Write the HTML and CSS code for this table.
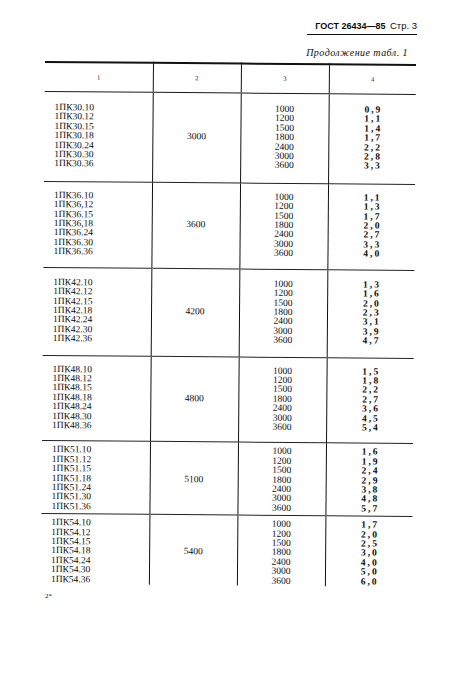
FILE: index.html
```html
<!DOCTYPE html>
<html lang="ru">
<head>
<meta charset="utf-8">
<title>ГОСТ 26434—85 Стр. 3</title>
<link rel="stylesheet" href="styles.css">
</head>
<body>
<div class="page">
  <header class="running-head"><span class="doc">ГОСТ 26434—85</span> <span class="pg">Стр. 3</span></header>
  <p class="caption">Продолжение табл. 1</p>
  <table class="data">
    <colgroup>
      <col class="c1"><col class="c2"><col class="c3"><col class="c4">
    </colgroup>
    <thead>
      <tr class="head"><th>1</th><th>2</th><th>3</th><th>4</th></tr>
    </thead>
    <tbody>
      <tr class="grp g1">
        <td class="mark">1ПК30.10<br>1ПК30.12<br>1ПК30.15<br>1ПК30.18<br>1ПК30.24<br>1ПК30.30<br>1ПК30.36</td>
        <td class="len">3000</td>
        <td class="wid">1000<br>1200<br>1500<br>1800<br>2400<br>3000<br>3600</td>
        <td class="mass">0,9<br>1,1<br>1,4<br>1,7<br>2,2<br>2,8<br>3,3</td>
      </tr>
      <tr class="grp g2">
        <td class="mark">1ПК36.10<br>1ПК36,12<br>1ПК36.15<br>1ПК36,18<br>1ПК36.24<br>1ПК36.30<br>1ПК36.36</td>
        <td class="len">3600</td>
        <td class="wid">1000<br>1200<br>1500<br>1800<br>2400<br>3000<br>3600</td>
        <td class="mass">1,1<br>1,3<br>1,7<br>2,0<br>2,7<br>3,3<br>4,0</td>
      </tr>
      <tr class="grp g3">
        <td class="mark">1ПК42.10<br>1ПК42.12<br>1ПК42.15<br>1ПК42.18<br>1ПК42.24<br>1ПК42.30<br>1ПК42.36</td>
        <td class="len">4200</td>
        <td class="wid">1000<br>1200<br>1500<br>1800<br>2400<br>3000<br>3600</td>
        <td class="mass">1,3<br>1,6<br>2,0<br>2,3<br>3,1<br>3,9<br>4,7</td>
      </tr>
      <tr class="grp g4">
        <td class="mark">1ПК48.10<br>1ПК48.12<br>1ПК48.15<br>1ПК48.18<br>1ПК48.24<br>1ПК48.30<br>1ПК48.36</td>
        <td class="len">4800</td>
        <td class="wid">1000<br>1200<br>1500<br>1800<br>2400<br>3000<br>3600</td>
        <td class="mass">1,5<br>1,8<br>2,2<br>2,7<br>3,6<br>4,5<br>5,4</td>
      </tr>
      <tr class="grp g5">
        <td class="mark">1ПК51.10<br>1ПК51.12<br>1ПК51.15<br>1ПК51.18<br>1ПК51.24<br>1ПК51.30<br>1ПК51.36</td>
        <td class="len">5100</td>
        <td class="wid">1000<br>1200<br>1500<br>1800<br>2400<br>3000<br>3600</td>
        <td class="mass">1,6<br>1,9<br>2,4<br>2,9<br>3,8<br>4,8<br>5,7</td>
      </tr>
      <tr class="grp g6">
        <td class="mark">1ПК54.10<br>1ПК54.12<br>1ПК54.15<br>1ПК54.18<br>1ПК54.24<br>1ПК54.30<br>1ПК54.36</td>
        <td class="len">5400</td>
        <td class="wid">1000<br>1200<br>1500<br>1800<br>2400<br>3000<br>3600</td>
        <td class="mass">1,7<br>2,0<br>2,5<br>3,0<br>4,0<br>5,0<br>6,0</td>
      </tr>
    </tbody>
  </table>
  <p class="sig">2*</p>
</div>
</body>
</html>
```

FILE: styles.css
```css
html, body {
  margin: 0;
  padding: 0;
  background: #ffffff;
}

.page {
  width: 452px;
  height: 682px;
  color: #0d0d0d;
  font-family: "Liberation Serif", "DejaVu Serif", serif;
  display: flex;
  flex-direction: column;
}

.running-head {
  align-self: flex-end;
  margin: 19px 35px 0 0;
  padding: 0 0 3px 8px;
  border-bottom: 1.8px solid #111111;
  font-family: "Liberation Sans", "DejaVu Sans", sans-serif;
  line-height: 10px;
  white-space: nowrap;
}

.running-head .doc {
  font-weight: bold;
  font-size: 9px;
}

.running-head .pg {
  font-size: 9.5px;
}

.caption {
  align-self: flex-end;
  margin: 13px 44px 0 0;
  font-family: "Liberation Serif", "DejaVu Serif", serif;
  font-style: italic;
  font-size: 10px;
  letter-spacing: 0.45px;
  line-height: 10px;
}

.data {
  margin: 3px 0 0 45px;
  width: 371px;
  border-collapse: collapse;
  table-layout: fixed;
  border-top: 2.2px solid #111111;
  font-size: 9.5px;
  line-height: 9.4px;
  transform: rotate(0.45deg);
  transform-origin: 0 0;
}

.c1 { width: 108px; }
.c2 { width: 88px; }
.c3 { width: 88px; }
.c4 { width: 87px; }

.data th,
.data td {
  padding: 0;
  text-align: center;
  vertical-align: middle;
}

.data th + th,
.data td + td {
  border-left: 1.4px solid #111111;
}

.head th {
  height: 28px;
  font-weight: normal;
  font-size: 6.5px;
  border-bottom: 1.8px solid #1a1a1a;
}

.grp + .grp td {
  border-top: 1.5px solid #222222;
}

.data td.mark {
  text-align: left;
  padding-left: 10px;
}

.data td.mass {
  letter-spacing: 2px;
  padding-left: 2px;
  font-weight: bold;
}

.g1 td { padding-top: 11px; padding-bottom: 12px; }
.g2 td { padding-top: 9px; padding-bottom: 10px; }
.g3 td { padding-top: 10px; padding-bottom: 11px; }
.g4 td { padding-top: 9px; padding-bottom: 10px; }
.g5 td { padding-top: 4px; padding-bottom: 2px; }
.g6 td { padding-top: 4px; padding-bottom: 0; }

.sig {
  margin: 8px 0 0 45px;
  font-size: 7px;
  line-height: 8px;
}
```
